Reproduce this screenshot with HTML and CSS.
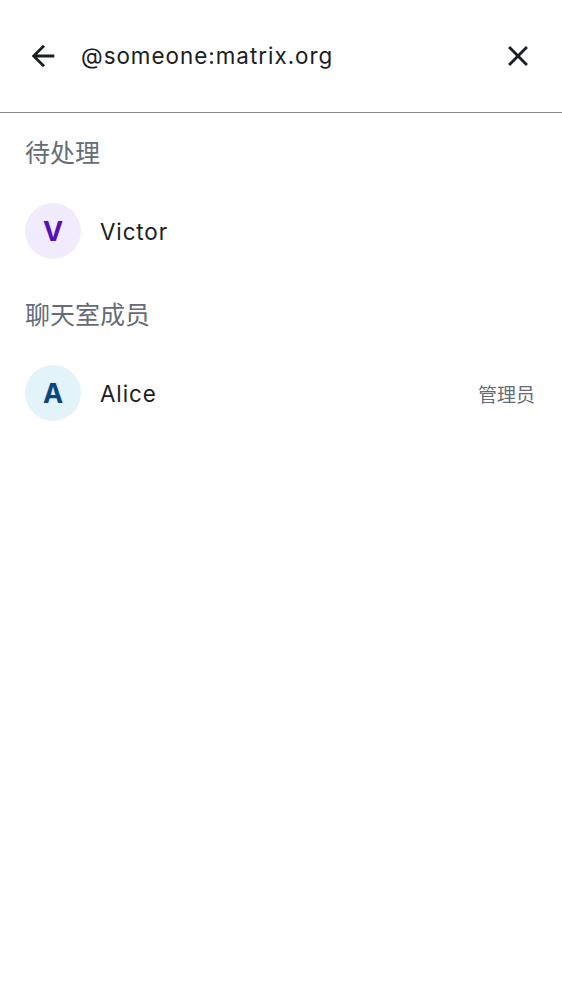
FILE: index.html
```html
<!DOCTYPE html>
<html lang="zh">
<head>
<meta charset="utf-8">
<link rel="stylesheet" href="styles.css">
</head>
<body>
<header class="search-bar">
  <button class="icon-btn" aria-label="返回">
    <svg viewBox="0 0 24 24" width="34" height="34"><path d="M20 11H7.83l5.59-5.59L12 4l-8 8 8 8 1.41-1.41L7.83 13H20v-2z" fill="#1b1d22"/></svg>
  </button>
  <div class="query">@someone:matrix.org</div>
  <button class="icon-btn" aria-label="清除">
    <svg viewBox="0 0 24 24" width="34" height="34"><path d="M19 6.41 17.59 5 12 10.59 6.41 5 5 6.41 10.59 12 5 17.59 6.41 19 12 13.41 17.59 19 19 17.59 13.41 12z" fill="#1b1d22"/></svg>
  </button>
</header>
<main>
  <section class="section">
    <h2 class="section-title">待处理</h2>
    <div class="list">
      <div class="row">
        <div class="avatar avatar-v">V</div>
        <div class="name">Victor</div>
      </div>
    </div>
  </section>
  <section class="section">
    <h2 class="section-title">聊天室成员</h2>
    <div class="list">
      <div class="row">
        <div class="avatar avatar-a">A</div>
        <div class="name">Alice</div>
        <div class="role">管理员</div>
      </div>
    </div>
  </section>
</main>
</body>
</html>
```
FILE: styles.css
```css
* { box-sizing: border-box; }
html, body { margin: 0; padding: 0; background: #fff; }
body {
  font-family: Inter, "Noto Sans CJK SC", sans-serif;
  color: #1b1d22;
  width: 562px;
}
.search-bar {
  height: 113px;
  display: flex;
  align-items: center;
  padding: 0 27px 0 26px;
  border-bottom: 1px solid #8a8c90;
}
.icon-btn {
  width: 34px;
  height: 34px;
  padding: 0;
  border: 0;
  background: none;
  display: flex;
}
.query {
  flex: 1;
  margin-left: 21px;
  font-size: 22.4px;
  letter-spacing: 1px;
  color: #1b1d22;
  line-height: 28px;
}
.section { padding-top: 12px; padding-bottom: 8px; }
.section-title {
  margin: 0;
  height: 56px;
  display: flex;
  align-items: center;
  padding: 0 25px 4px;
  font-size: 25px;
  font-weight: 400;
  color: #656c76;
}
.list { padding-top: 14px; }
.row {
  height: 72px;
  display: flex;
  align-items: center;
  padding: 0 27px 0 25px;
}
.avatar {
  width: 56px;
  height: 56px;
  border-radius: 50%;
  display: flex;
  align-items: center;
  justify-content: center;
  font-size: 27px;
  font-weight: 700;
}
.avatar-v { background: #f0ecfd; color: #5a0fb6; }
.avatar-a { background: #e2f3f9; color: #0b467f; }
.name {
  flex: 1;
  margin-left: 19px;
  font-size: 22.4px;
  letter-spacing: 0.9px;
}
.role {
  font-size: 19px;
  color: #656c76;
}
```
